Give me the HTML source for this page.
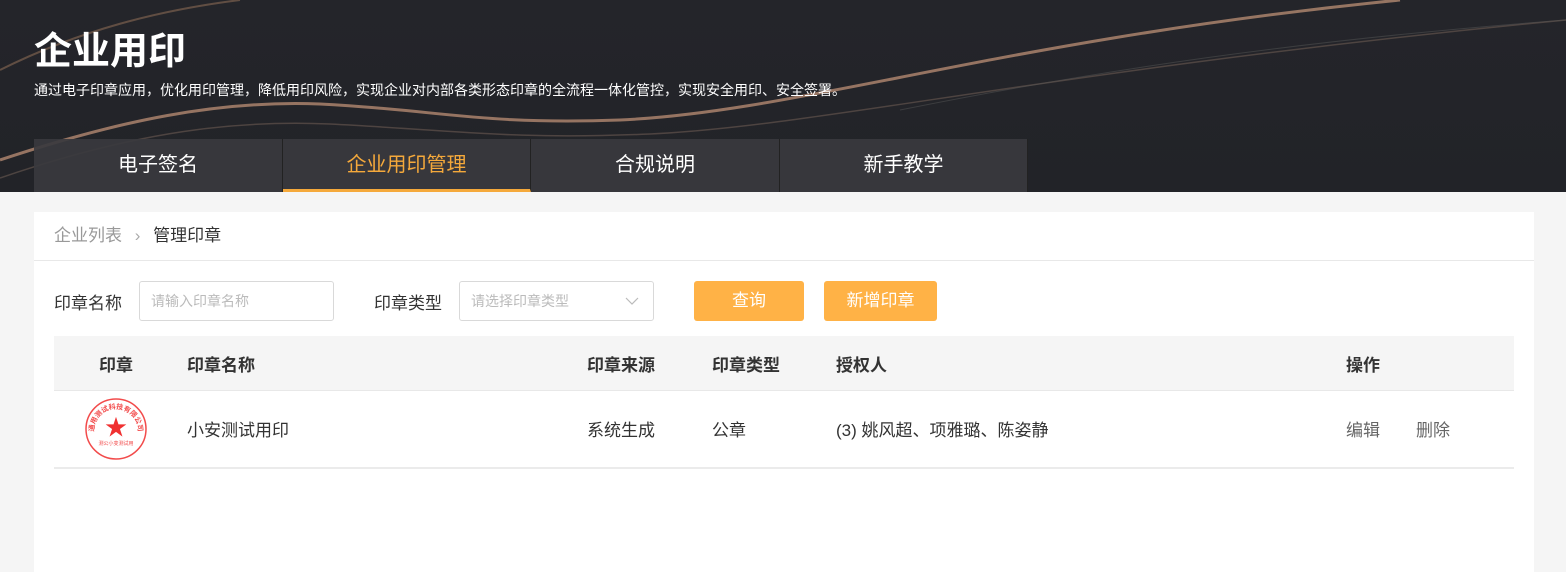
<!DOCTYPE html>
<html><head><meta charset="utf-8"><style>
*{margin:0;padding:0;box-sizing:border-box}
body{width:1566px;height:570px;overflow:hidden;background:#f5f5f5;font-family:"Liberation Sans","Noto Sans CJK SC",sans-serif;position:relative}
.hdr{position:absolute;left:0;top:0;width:1566px;height:192px;background:linear-gradient(180deg,#24252a,#222328);overflow:hidden}
.hdr h1{position:absolute;left:34px;top:30px;color:#fff;font-size:38px;font-weight:bold;line-height:44px}
.hdr p{position:absolute;left:34px;top:80px;color:#fff;font-size:14px}
.tabs{position:absolute;left:34px;top:139px;height:53px;display:flex}
.tab{width:249px;height:53px;background:rgba(58,58,62,.92);color:#fff;font-size:20px;text-align:center;line-height:52px;border-right:1px solid #222}
.tab.on{color:#f5a93b;border-bottom:3px solid #f5a93b}
.card{position:absolute;left:34px;top:212px;width:1500px;height:360px;background:#fff}
.bc{height:49px;border-bottom:1px solid #e8e8e8;padding-left:20px;line-height:47px;font-size:17px;color:#999}
.bc b{font-weight:normal;color:#333}
.lbl{position:absolute;font-size:17px;color:#333}
.inp{position:absolute;height:40px;border:1px solid #d9d9d9;border-radius:3px;font-size:14px;color:#bbb;padding-left:11px;line-height:38px}
.btn{position:absolute;top:69px;height:40px;background:#ffb246;color:#fff;border-radius:3px;font-size:17px;text-align:center;line-height:40px}
.th{position:absolute;left:20px;top:124px;width:1460px;height:55px;background:#f5f5f5;border-bottom:1px solid #e8e8e8}
.c{position:absolute;font-size:17px;color:#333}
.th .c{font-weight:bold;top:15px}
.row{position:absolute;left:20px;top:179px;width:1460px;height:78px;border-bottom:2px solid #ebebeb}
.row .c{top:25px}
</style></head><body>
<div class="hdr">
<svg width="1566" height="192" style="position:absolute;left:0;top:0">
<path d="M0 70 C80 30 160 10 240 0" stroke="#8a6a55" stroke-width="2" fill="none" opacity=".6"/>
<path d="M0 160 C120 120 220 100 320 104 C440 110 480 125 620 120 C800 112 1000 40 1400 0" stroke="#c8977a" stroke-width="3" fill="none" opacity=".7"/>
<path d="M0 178 C140 130 240 120 330 124 C450 130 510 140 650 134 C820 126 1050 70 1566 20" stroke="#6a5a52" stroke-width="1.5" fill="none" opacity=".6"/>
<path d="M900 110 C1100 70 1300 40 1566 20" stroke="#555" stroke-width="1" fill="none" opacity=".5"/>
</svg>
<h1>企业用印</h1>
<p>通过电子印章应用，优化用印管理，降低用印风险，实现企业对内部各类形态印章的全流程一体化管控，实现安全用印、安全签署。</p>
<div class="tabs"><div class="tab">电子签名</div><div class="tab on" style="width:248px">企业用印管理</div><div class="tab">合规说明</div><div class="tab" style="width:248px">新手教学</div></div>
</div>
<div class="card">
<div class="bc">企业列表 <span style="margin:0 8px;color:#aaa">&#8250;</span> <b>管理印章</b></div>
<div class="lbl" style="left:20px;top:77px">印章名称</div>
<div class="inp" style="left:105px;top:69px;width:195px">请输入印章名称</div>
<div class="lbl" style="left:340px;top:77px">印章类型</div>
<div class="inp" style="left:425px;top:69px;width:195px">请选择印章类型<svg width="14" height="8" style="position:absolute;right:14px;top:15px"><path d="M1 1 L7 7 L13 1" stroke="#bbb" stroke-width="1.2" fill="none"/></svg></div>
<div class="btn" style="left:660px;width:110px">查询</div>
<div class="btn" style="left:790px;width:113px">新增印章</div>
<div class="th"><div class="c" style="left:45px">印章</div><div class="c" style="left:133px">印章名称</div><div class="c" style="left:533px">印章来源</div><div class="c" style="left:658px">印章类型</div><div class="c" style="left:782px">授权人</div><div class="c" style="left:1292px">操作</div></div>
<div class="row">
<svg width="64" height="64" style="position:absolute;left:30px;top:6px"><defs><path id="arc" d="M10 34 A22 22 0 0 1 54 34"/></defs><circle cx="32" cy="32" r="30" fill="none" stroke="#f24b4b" stroke-width="1.5"/><text font-size="7" fill="#f24b4b" font-weight="bold"><textPath href="#arc" startOffset="50%" text-anchor="middle">通用测试科技有限公司</textPath></text><text x="32" y="38" font-size="22" fill="#f03030" text-anchor="middle">★</text><text x="32" y="48" font-size="5" fill="#f24b4b" text-anchor="middle">测公小变测试用</text></svg>
<div class="c" style="left:133px">小安测试用印</div><div class="c" style="left:533px">系统生成</div><div class="c" style="left:658px">公章</div><div class="c" style="left:782px">(3) 姚风超、项雅璐、陈姿静</div><div class="c" style="left:1292px;color:#666">编辑</div><div class="c" style="left:1362px;color:#666">删除</div>
</div>
</div>
</body></html>
